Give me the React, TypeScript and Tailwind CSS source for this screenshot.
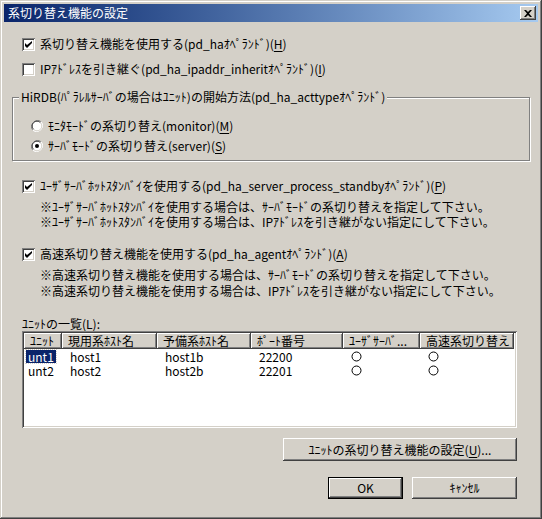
import React from "react";

const font = { fontFamily: '"Noto Sans CJK JP", "Liberation Sans", sans-serif' };

const raised =
  "bg-[#d4d0c8] shadow-[inset_-1px_-1px_0_#404040,inset_1px_1px_0_#fff,inset_-2px_-2px_0_#808080,inset_2px_2px_0_#d4d0c8]";
const sunken =
  "shadow-[inset_1px_1px_0_#808080,inset_-1px_-1px_0_#fff,inset_2px_2px_0_#404040,inset_-2px_-2px_0_#d4d0c8]";

function U({ children }: { children: React.ReactNode }) {
  return <span className="underline underline-offset-2">{children}</span>;
}

function Checkbox({ checked, children }: { checked?: boolean; children: React.ReactNode }) {
  return (
    <div className="flex h-4 items-center gap-[5px]">
      <div className={`relative h-[13px] w-[13px] shrink-0 bg-white ${sunken}`}>
        {checked && (
          <svg className="absolute left-[3px] top-[3px]" width="7" height="7" viewBox="0 0 7 7">
            <path d="M0 2v3l2 2 5-5V-0L2 4Z" fill="#000" />
          </svg>
        )}
      </div>
      <span className="whitespace-nowrap">{children}</span>
    </div>
  );
}

function Radio({ checked, children }: { checked?: boolean; children: React.ReactNode }) {
  return (
    <div className="flex h-4 items-center gap-[5px]">
      <svg width="12" height="12" viewBox="0 0 12 12" className="shrink-0">
        <circle cx="6" cy="6" r="5.5" fill="#fff" />
        <path d="M10.2 1.8A6 6 0 0 0 1.8 10.2" stroke="#808080" fill="none" />
        <path d="M9.4 2.6A4.8 4.8 0 0 0 2.6 9.4" stroke="#404040" fill="none" />
        <path d="M1.8 10.2A6 6 0 0 0 10.2 1.8" stroke="#fff" fill="none" />
        <path d="M2.6 9.4A4.8 4.8 0 0 0 9.4 2.6" stroke="#d4d0c8" fill="none" />
        {checked && <circle cx="6" cy="6" r="2" fill="#000" />}
      </svg>
      <span className="whitespace-nowrap">{children}</span>
    </div>
  );
}

function Ring() {
  return (
    <svg width="11" height="11" viewBox="0 0 11 11">
      <circle cx="5.5" cy="5.5" r="4.5" fill="#fff" stroke="#000" />
    </svg>
  );
}

const cols = [
  { label: "ﾕﾆｯﾄ", w: 38 },
  { label: "現用系ﾎｽﾄ名", w: 95 },
  { label: "予備系ﾎｽﾄ名", w: 94 },
  { label: "ﾎﾟｰﾄ番号", w: 92 },
  { label: "ﾕｰｻﾞｻｰﾊﾞ...", w: 77 },
  { label: "高速系切り替え", w: 94 },
];

const units = [
  { unit: "unt1", host: "host1", spare: "host1b", port: "22200" },
  { unit: "unt2", host: "host2", spare: "host2b", port: "22201" },
];

export default function App() {
  return (
    <div
      style={font}
      className="h-[519px] w-[542px] bg-[#d4d0c8] p-[4px] text-[12px] leading-[14px] text-black shadow-[inset_-1px_-1px_0_#404040,inset_1px_1px_0_#d4d0c8,inset_-2px_-2px_0_#808080,inset_2px_2px_0_#fff]"
    >
      {/* title bar */}
      <div className="flex h-[18px] items-center justify-between bg-gradient-to-r from-[#0a246a] to-[#a6caf0] pl-[4px] pr-[2px]">
        <span className="text-white">系切り替え機能の設定</span>
        <div className={`flex h-[14px] w-[16px] items-center justify-center ${raised}`}>
          <svg width="8" height="7" viewBox="0 0 8 7">
            <path d="M0 0h2l2 2 2-2h2L5 3.5 8 7H6L4 5 2 7H0l3-3.5Z" fill="#000" />
          </svg>
        </div>
      </div>

      <div className="flex flex-col px-[18px] pt-[14px]">
        <Checkbox checked>
          系切り替え機能を使用する(pd_haｵﾍﾟﾗﾝﾄﾞ)(<U>H</U>)
        </Checkbox>
        <div className="mt-[9px]">
          <Checkbox>
            IPｱﾄﾞﾚｽを引き継ぐ(pd_ha_ipaddr_inheritｵﾍﾟﾗﾝﾄﾞ)(<U>I</U>)
          </Checkbox>
        </div>

        {/* group box */}
        <div className="relative -mx-[10px] mt-[20px] h-[64px] border border-[#808080] shadow-[1px_1px_0_#fff,inset_1px_1px_0_#fff]">
          <span className="absolute -top-[8px] left-[6px] bg-[#d4d0c8] px-[2px]">
            HiRDB(ﾊﾟﾗﾚﾙｻｰﾊﾞの場合はﾕﾆｯﾄ)の開始方法(pd_ha_acttypeｵﾍﾟﾗﾝﾄﾞ)
          </span>
          <div className="flex flex-col gap-[4px] pl-[18px] pt-[20px]">
            <Radio>
              ﾓﾆﾀﾓｰﾄﾞの系切り替え(monitor)(<U>M</U>)
            </Radio>
            <Radio checked>
              ｻｰﾊﾞﾓｰﾄﾞの系切り替え(server)(<U>S</U>)
            </Radio>
          </div>
        </div>

        <div className="mt-[17px]">
          <Checkbox checked>
            ﾕｰｻﾞｻｰﾊﾞﾎｯﾄｽﾀﾝﾊﾞｲを使用する(pd_ha_server_process_standbyｵﾍﾟﾗﾝﾄﾞ)(<U>P</U>)
          </Checkbox>
        </div>
        <div className="mt-[6px] flex flex-col gap-[1px] pl-[18px]">
          <span>※ﾕｰｻﾞｻｰﾊﾞﾎｯﾄｽﾀﾝﾊﾞｲを使用する場合は、ｻｰﾊﾞﾓｰﾄﾞの系切り替えを指定して下さい。</span>
          <span>※ﾕｰｻﾞｻｰﾊﾞﾎｯﾄｽﾀﾝﾊﾞｲを使用する場合は、IPｱﾄﾞﾚｽを引き継がない指定にして下さい。</span>
        </div>

        <div className="mt-[17px]">
          <Checkbox checked>
            高速系切り替え機能を使用する(pd_ha_agentｵﾍﾟﾗﾝﾄﾞ)(<U>A</U>)
          </Checkbox>
        </div>
        <div className="mt-[6px] flex flex-col gap-[2px] pl-[18px]">
          <span>※高速系切り替え機能を使用する場合は、ｻｰﾊﾞﾓｰﾄﾞの系切り替えを指定して下さい。</span>
          <span>※高速系切り替え機能を使用する場合は、IPｱﾄﾞﾚｽを引き継がない指定にして下さい。</span>
        </div>

        <div className="mt-[19px]">
          ﾕﾆｯﾄの一覧(<U>L</U>):
        </div>

        {/* list view */}
        <div className={`h-[97px] w-[495px] bg-white p-[2px] ${sunken}`}>
          <div className="flex h-[16px]">
            {cols.map((c) => (
              <div
                key={c.label}
                style={{ width: c.w }}
                className={`flex shrink-0 items-center overflow-hidden whitespace-nowrap px-[6px] ${raised}`}
              >
                {c.label}
              </div>
            ))}
          </div>
          <div className="flex flex-col">
            {units.map((u, i) => (
              <div key={u.unit} className="flex h-[14px] items-center leading-[13px]">
                <div style={{ width: cols[0].w }} className="shrink-0 pl-[2px]">
                  <span
                    className={
                      i === 0
                        ? "inline-block bg-[#0a246a] px-[2px] text-white outline-1 outline-dotted outline-[#d4d0c8]"
                        : "inline-block px-[2px]"
                    }
                  >
                    {u.unit}
                  </span>
                </div>
                <div style={{ width: cols[1].w }} className="shrink-0 pl-[8px]">
                  {u.host}
                </div>
                <div style={{ width: cols[2].w }} className="shrink-0 pl-[8px]">
                  {u.spare}
                </div>
                <div style={{ width: cols[3].w }} className="shrink-0 pl-[8px]">
                  {u.port}
                </div>
                <div style={{ width: cols[4].w }} className="flex shrink-0 pl-[8px]">
                  <Ring />
                </div>
                <div style={{ width: cols[5].w }} className="flex shrink-0 pl-[8px]">
                  <Ring />
                </div>
              </div>
            ))}
          </div>
        </div>

        <div className="mt-[10px] flex justify-end pr-[3px]">
          <div className={`flex h-[23px] w-[234px] items-center justify-center ${raised}`}>
            ﾕﾆｯﾄの系切り替え機能の設定(<U>U</U>)...
          </div>
        </div>

        <div className="mt-[16px] flex justify-end gap-[9px] pr-[3px]">
          <div className="h-[22px] w-[75px] border border-black">
            <div className={`flex h-full w-full items-center justify-center ${raised}`}>OK</div>
          </div>
          <div className={`flex h-[22px] w-[105px] items-center justify-center ${raised}`}>ｷｬﾝｾﾙ</div>
        </div>
      </div>
    </div>
  );
}
